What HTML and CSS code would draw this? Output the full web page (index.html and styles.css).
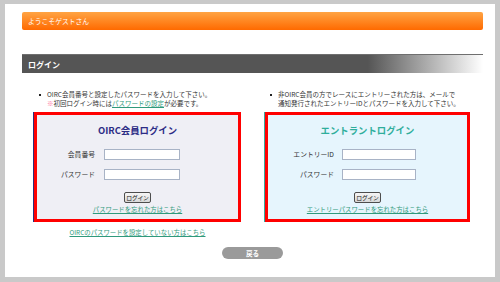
FILE: index.html
```html
<!DOCTYPE html>
<html lang="ja">
<head>
    <meta charset="UTF-8">
    <meta name="viewport" content="width=device-width, initial-scale=1.0">
    <title>ログイン</title>
    <link rel="stylesheet" href="styles.css">
</head>
<body>

    <div class="page">
        <div class="welcome">ようこそゲストさん</div>

        <h2 class="section-title">ログイン</h2>

        <div class="login-columns">
            <div class="column">
                <div class="note">
                    <span class="bullet"></span>
                    <p>OIRC会員番号と設定したパスワードを入力して下さい。<br><span class="mark">※</span>初回ログイン時には<a href="#">パスワードの設定</a>が必要です。</p>
                </div>
                <div class="login-box member">
                    <h3>OIRC会員ログイン</h3>
                    <div class="field">
                        <label>会員番号</label>
                        <input type="text">
                    </div>
                    <div class="field">
                        <label>パスワード</label>
                        <input type="password">
                    </div>
                    <button class="login-button">ログイン</button>
                    <a href="#" class="forgot">パスワードを忘れた方はこちら</a>
                </div>
                <a href="#" class="extra-link">OIRCのパスワードを設定していない方はこちら</a>
            </div>

            <div class="column">
                <div class="note">
                    <span class="bullet"></span>
                    <p>非OIRC会員の方でレースにエントリーされた方は、メールで<br>通知発行されたエントリーIDとパスワードを入力して下さい。</p>
                </div>
                <div class="login-box entrant">
                    <h3>エントラントログイン</h3>
                    <div class="field">
                        <label>エントリーID</label>
                        <input type="text">
                    </div>
                    <div class="field">
                        <label>パスワード</label>
                        <input type="password">
                    </div>
                    <button class="login-button">ログイン</button>
                    <a href="#" class="forgot">エントリーパスワードを忘れた方はこちら</a>
                </div>
            </div>
        </div>

        <div class="back-row">
            <button class="back-button">戻る</button>
        </div>
    </div>

</body>
</html>
```

FILE: styles.css
```css
body {
    margin: 0;
    background-color: #c9c9c9;
    font-family: "Noto Sans CJK JP", "Liberation Sans", sans-serif;
    color: #333;
}

.page {
    margin: 4px 5px 5px 5px;
    height: 273px;
    box-sizing: border-box;
    background-color: #ffffff;
    padding: 8px 12px 0 17px;
}

/* Orange welcome bar */
.welcome {
    height: 18px;
    line-height: 18px;
    border-radius: 2px;
    background: linear-gradient(to bottom, #ffa444, #ff6a00);
    color: white;
    font-size: 6.8px;
    padding-left: 6px;
}

/* Grey section title */
.section-title {
    margin: 24px 0 0 0;
    height: 19px;
    line-height: 19px;
    padding-left: 6px;
    background: linear-gradient(to right, #555555 0%, #555555 75%, #ffffff 100%);
    border-top: 1px solid #6f6f6f;
    box-sizing: border-box;
    color: white;
    font-size: 8px;
    font-weight: bold;
}

/* Two login columns */
.login-columns {
    display: flex;
    gap: 24px;
    padding-left: 12px;
    margin-top: 17px;
}

.column {
    display: flex;
    flex-direction: column;
}

.column:first-child {
    width: 207px;
}

.column:last-child {
    width: 205px;
}

.note {
    display: flex;
    align-items: flex-start;
    padding-left: 5px;
    font-size: 6.5px;
    line-height: 9.4px;
    color: #333;
}

.note p {
    margin: 0;
    white-space: nowrap;
}

.bullet {
    width: 2px;
    height: 2px;
    background-color: #222;
    margin: 4px 6px 0 0;
    flex-shrink: 0;
}

.mark {
    color: #ff6f9a;
}

a {
    color: #2f9a7c;
}

/* Login boxes */
.login-box {
    margin-top: 3px;
    height: 110px;
    box-sizing: border-box;
    border: 3px solid #ff0000;
    padding-top: 9px;
    display: flex;
    flex-direction: column;
    align-items: center;
}

.login-box.member {
    background-color: #efeff5;
    box-shadow: -1px 0 0 #2b2f7a;
}

.login-box.entrant {
    background-color: #e6f5fd;
    box-shadow: -1px 0 0 #3aa9a0;
}

.login-box h3 {
    margin: 0 0 13px 0;
    font-size: 9.4px;
    line-height: 12px;
    font-weight: bold;
}

.member h3 {
    color: #2c2c85;
}

.entrant h3 {
    color: #2fae9c;
}

.field {
    display: flex;
    align-items: center;
    align-self: flex-start;
    height: 11px;
    margin-bottom: 9px;
    font-size: 6.8px;
}

.field label {
    text-align: right;
    white-space: nowrap;
}

.member .field label {
    width: 58px;
    margin-right: 9px;
}

.entrant .field label {
    width: 66px;
    margin-right: 8px;
}

.field input {
    height: 11px;
    box-sizing: border-box;
    border: 1px solid #a8b3c6;
    background-color: white;
    padding: 0;
    margin: 0;
}

.member .field input {
    width: 76px;
}

.entrant .field input {
    width: 74px;
}

.login-button {
    margin-top: 3px;
    width: 27px;
    height: 11px;
    padding: 0;
    font-family: inherit;
    font-size: 5.8px;
    letter-spacing: -0.2px;
    line-height: 9px;
    white-space: nowrap;
    color: #111;
    border: 1px solid #4d4d4d;
    border-radius: 2px;
    background: linear-gradient(to bottom, #f6f6f6, #d8d8d8);
}

.forgot {
    margin-top: 2px;
    font-size: 6.4px;
    line-height: 9px;
}

.extra-link {
    margin-top: 6px;
    align-self: center;
    font-size: 6.4px;
    line-height: 9px;
}

/* Back button */
.back-row {
    display: flex;
    justify-content: center;
    margin-top: 10px;
}

.back-button {
    width: 61px;
    height: 12px;
    padding: 0;
    border: none;
    border-radius: 6px;
    background-color: #9a9a9a;
    color: white;
    font-family: inherit;
    font-size: 6.6px;
    font-weight: bold;
    line-height: 12px;
}
```
